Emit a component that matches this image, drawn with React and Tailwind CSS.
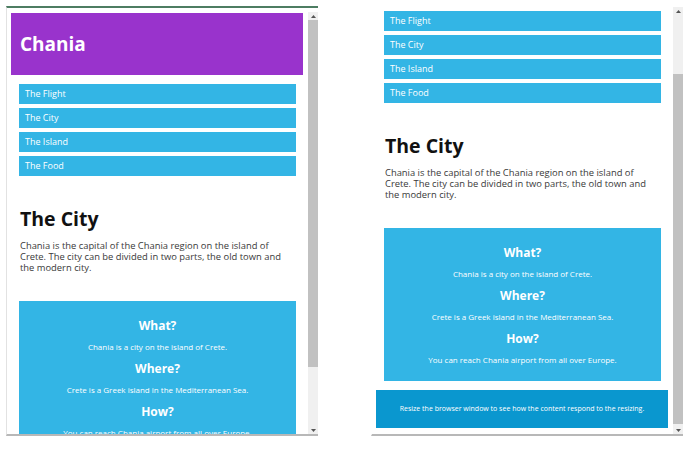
import React from "react";

const items = ["The Flight", "The City", "The Island", "The Food"];

const sections = [
  ["What?", "Chania is a city on the island of Crete."],
  ["Where?", "Crete is a Greek island in the Mediterranean Sea."],
  ["How?", "You can reach Chania airport from all over Europe."],
];

function Up() {
  return (
    <div className="h-[8px] flex items-center justify-center">
      <svg width="5" height="3" viewBox="0 0 5 3">
        <path d="M0 3 L2.5 0 L5 3 Z" fill="#555" />
      </svg>
    </div>
  );
}

function Down() {
  return (
    <div className="h-[8px] flex items-center justify-center">
      <svg width="5" height="3" viewBox="0 0 5 3">
        <path d="M0 0 L2.5 3 L5 0 Z" fill="#555" />
      </svg>
    </div>
  );
}

function Page({ header, footer }) {
  return (
    <div className={header ? "pt-[1px]" : "pt-[4px]"}>
      {header && (
        <div className="ml-[4px] mr-[5px] mb-[9px] h-[62px] bg-[#9933cc] flex items-center pl-[9px]">
          <h1 className="text-[19px] font-bold text-white leading-none">Chania</h1>
        </div>
      )}
      <ul className="mx-[12px] flex flex-col gap-[4px]">
        {items.map((t) => (
          <li key={t} className="h-[20px] bg-[#33b5e5] text-white text-[9px] leading-[20px] pl-[6px]">
            {t}
          </li>
        ))}
      </ul>
      <h2 className="mt-[31px] ml-[13px] text-[19.5px] leading-[24px] font-bold text-[#111]">The City</h2>
      <p className="mt-[9px] ml-[13px] w-[271px] text-[9.4px] leading-[11px] text-[#3a3a3a]">
        Chania is the capital of the Chania region on the island of Crete. The city can be divided in two parts, the old town and the modern city.
      </p>
      <div className="mt-[28px] mx-[12px] bg-[#33b5e5] text-white text-center pt-[17px] pb-[16px] flex flex-col gap-[9px]">
        {sections.map(([h, t]) => (
          <div key={h} className="flex flex-col gap-[8px]">
            <h3 className="text-[12px] leading-[16px] font-bold">{h}</h3>
            <p className="text-[8px] leading-[10px]">{t}</p>
          </div>
        ))}
      </div>
      {footer && (
        <div className="mt-[9px] ml-[4px] mr-[5px] h-[38px] bg-[#0a97cf] text-white text-[7px] flex items-center justify-center">
          Resize the browser window to see how the content respond to the resizing.
        </div>
      )}
    </div>
  );
}

export default function App() {
  return (
    <div
      className="w-[700px] h-[456px] bg-white flex items-start overflow-hidden"
      style={{ fontFamily: '"Open Sans", "Noto Sans", sans-serif' }}
    >
      <div className="ml-[6px] mt-[6px] w-[312px] h-[430px] border-t-2 border-t-[#4d7d62] border-l border-l-[#e2e2e2] border-b-2 border-b-[#b8b8b8] flex flex-col">
        <div className="mt-[4px] flex flex-1 min-h-0">
          <div className="w-[301px] overflow-hidden">
            <Page header footer={false} />
          </div>
          <div className="w-[10px] flex flex-col bg-[#f0f0f0]">
            <Up />
            <div className="h-[347px] bg-[#c1c1c1]" />
            <div className="flex-1" />
            <Down />
          </div>
        </div>
      </div>

      <div className="ml-[53px] mt-[7px] w-[312px] h-[429px] border-l border-l-white border-b-2 border-b-[#b8b8b8] flex flex-col">
        <div className="flex flex-1 min-h-0">
          <div className="w-[301px] overflow-hidden">
            <Page header={false} footer />
          </div>
          <div className="w-[10px] flex flex-col bg-[#f0f0f0]">
            <Up />
            <div className="h-[59px]" />
            <div className="h-[350px] bg-[#c1c1c1]" />
            <div className="flex-1" />
            <Down />
          </div>
        </div>
      </div>
    </div>
  );
}
